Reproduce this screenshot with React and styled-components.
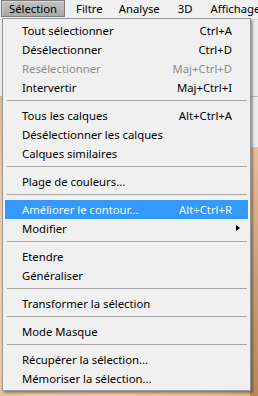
import React from 'react';
import styled, { createGlobalStyle } from 'styled-components';

const GlobalStyle = createGlobalStyle`
  html, body {
    margin: 0;
    padding: 0;
    background: #f0f0f0;
  }
  body {
    font-family: "Noto Sans", "Liberation Sans", sans-serif;
    font-size: 11.3px;
    color: #000;
  }
`;

const Screen = styled.div`
  position: relative;
  width: 258px;
  height: 396px;
  overflow: hidden;
  display: flex;
  flex-direction: column;
`;

const MenuBar = styled.div`
  display: flex;
  flex-flow: row nowrap;
  align-items: flex-start;
  height: 19px;
  padding-left: 1px;
  background: #f0f0f0;
  border-bottom: 1px solid #d8d8d8;
`;

const BarItem = styled.div`
  display: flex;
  align-items: center;
  padding: 0 7px;
  margin-left: ${({ shift }) => shift || 0}px;
  height: 17px;
  white-space: nowrap;
  box-sizing: border-box;
  border: 1px solid ${({ active }) => (active ? '#7c7c7c' : 'transparent')};
  background: ${({ active }) => (active ? 'linear-gradient(#c2c2c2, #a8a8a8)' : 'transparent')};
  box-shadow: ${({ active }) => (active ? 'inset 1px 1px 0 rgba(255,255,255,0.35)' : 'none')};
`;

const OptionsBar = styled.div`
  height: 76px;
  background: #ececec;
  border-bottom: 1px solid #b8b8b8;
`;

const Workspace = styled.div`
  flex: 1;
  display: flex;
  flex-flow: row nowrap;
`;

const Canvas = styled.div`
  flex: 1;
  background: radial-gradient(circle at 30% 60%, #f3d6b8 0%, #eac7a3 45%, #d9ab80 100%);
`;

const SidePanel = styled.div`
  width: 8px;
  display: flex;
  flex-direction: column;
`;

const PanelTop = styled.div`
  height: 50px;
  background: #ececec;
`;

const PanelPhoto = styled.div`
  flex: 1;
  background: linear-gradient(#e7bf98, #c89870 60%, #b8875c);
`;

const Dropdown = styled.div`
  position: absolute;
  top: 18px;
  left: 2px;
  width: 249px;
  box-sizing: border-box;
  padding: 2px 2px;
  background: #f0f0f0;
  border: 1px solid #979797;
  box-shadow: 2px 2px 2px rgba(0, 0, 0, 0.35);
`;

const Item = styled.div`
  position: relative;
  display: flex;
  flex-flow: row nowrap;
  align-items: center;
  justify-content: space-between;
  height: 19px;
  padding: 0 16px 0 17px;
  white-space: nowrap;
  color: ${({ disabled, active }) => (active ? '#f4f8ff' : disabled ? '#8d8d8d' : '#000')};
  background: ${({ active }) => (active ? '#3399ff' : 'transparent')};
`;

const Shortcut = styled.span`
  text-align: right;
`;

const SubArrow = styled.span`
  position: absolute;
  right: 8px;
  top: 6px;
  width: 0;
  height: 0;
  border-top: 3.5px solid transparent;
  border-bottom: 3.5px solid transparent;
  border-left: 4px solid #000;
`;

const Separator = styled.div`
  height: 1px;
  margin: 3px 1px 5px 2px;
  background: #a8a8a8;
`;

const groups = [
  [
    { label: 'Tout sélectionner', key: 'Ctrl+A' },
    { label: 'Désélectionner', key: 'Ctrl+D' },
    { label: 'Resélectionner', key: 'Maj+Ctrl+D', disabled: true },
    { label: 'Intervertir', key: 'Maj+Ctrl+I' },
  ],
  [
    { label: 'Tous les calques', key: 'Alt+Ctrl+A' },
    { label: 'Désélectionner les calques' },
    { label: 'Calques similaires' },
  ],
  [{ label: 'Plage de couleurs...' }],
  [
    { label: 'Améliorer le contour...', key: 'Alt+Ctrl+R', active: true },
    { label: 'Modifier', sub: true },
  ],
  [{ label: 'Etendre' }, { label: 'Généraliser' }],
  [{ label: 'Transformer la sélection' }],
  [{ label: 'Mode Masque' }],
  [{ label: 'Récupérer la sélection...' }, { label: 'Mémoriser la sélection...' }],
];

const menus = [
  { label: 'Sélection', active: true },
  { label: 'Filtre', shift: 3 },
  { label: 'Analyse' },
  { label: '3D', shift: 2 },
  { label: 'Affichage', shift: 2 },
];

export default function App() {
  return (
    <>
      <GlobalStyle />
      <Screen>
        <MenuBar>
          {menus.map(m => (
            <BarItem key={m.label} active={m.active} shift={m.shift}>
              {m.label}
            </BarItem>
          ))}
        </MenuBar>
        <OptionsBar />
        <Workspace>
          <Canvas />
          <SidePanel>
            <PanelTop />
            <PanelPhoto />
          </SidePanel>
        </Workspace>

        <Dropdown>
          {groups.map((group, gi) => (
            <React.Fragment key={gi}>
              {gi > 0 && <Separator />}
              {group.map(it => (
                <Item key={it.label} disabled={it.disabled} active={it.active}>
                  <span>{it.label}</span>
                  {it.key && <Shortcut>{it.key}</Shortcut>}
                  {it.sub && <SubArrow />}
                </Item>
              ))}
            </React.Fragment>
          ))}
        </Dropdown>
      </Screen>
    </>
  );
}
